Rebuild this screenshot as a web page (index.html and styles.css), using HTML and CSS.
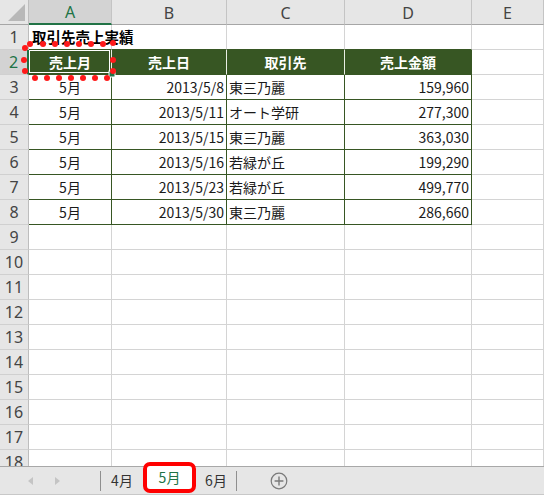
FILE: index.html
```html
<!DOCTYPE html>
<html lang="ja">
<head>
<meta charset="utf-8">
<link rel="stylesheet" href="styles.css">
</head>
<body>
<div class="sheet">
  <div class="grid">
    <div class="corner"><span class="tri"></span></div>
    <div class="ch sel">A</div>
    <div class="ch">B</div>
    <div class="ch">C</div>
    <div class="ch">D</div>
    <div class="ch">E</div>

    <div class="rh">1</div>
    <div class="c title tb">取引先売上実績</div>
    <div class="c tb"></div>
    <div class="c tb"></div>
    <div class="c tb"></div>
    <div class="c"></div>

    <div class="rh rsel">2</div>
    <div class="c hd">売上月</div>
    <div class="c hd">売上日</div>
    <div class="c hd">取引先</div>
    <div class="c hd last">売上金額</div>
    <div class="c"></div>

    <div class="rh">3</div>
    <div class="c d ctr">5月</div>
    <div class="c d num">2013/5/8</div>
    <div class="c d">東三乃麗</div>
    <div class="c d num">159,960</div>
    <div class="c"></div>

    <div class="rh">4</div>
    <div class="c d ctr">5月</div>
    <div class="c d num">2013/5/11</div>
    <div class="c d">オート学研</div>
    <div class="c d num">277,300</div>
    <div class="c"></div>

    <div class="rh">5</div>
    <div class="c d ctr">5月</div>
    <div class="c d num">2013/5/15</div>
    <div class="c d">東三乃麗</div>
    <div class="c d num">363,030</div>
    <div class="c"></div>

    <div class="rh">6</div>
    <div class="c d ctr">5月</div>
    <div class="c d num">2013/5/16</div>
    <div class="c d">若緑が丘</div>
    <div class="c d num">199,290</div>
    <div class="c"></div>

    <div class="rh">7</div>
    <div class="c d ctr">5月</div>
    <div class="c d num">2013/5/23</div>
    <div class="c d">若緑が丘</div>
    <div class="c d num">499,770</div>
    <div class="c"></div>

    <div class="rh">8</div>
    <div class="c d ctr">5月</div>
    <div class="c d num">2013/5/30</div>
    <div class="c d">東三乃麗</div>
    <div class="c d num">286,660</div>
    <div class="c"></div>

    <div class="rh">9</div><div class="c"></div><div class="c"></div><div class="c"></div><div class="c"></div><div class="c"></div>
    <div class="rh">10</div><div class="c"></div><div class="c"></div><div class="c"></div><div class="c"></div><div class="c"></div>
    <div class="rh">11</div><div class="c"></div><div class="c"></div><div class="c"></div><div class="c"></div><div class="c"></div>
    <div class="rh">12</div><div class="c"></div><div class="c"></div><div class="c"></div><div class="c"></div><div class="c"></div>
    <div class="rh">13</div><div class="c"></div><div class="c"></div><div class="c"></div><div class="c"></div><div class="c"></div>
    <div class="rh">14</div><div class="c"></div><div class="c"></div><div class="c"></div><div class="c"></div><div class="c"></div>
    <div class="rh">15</div><div class="c"></div><div class="c"></div><div class="c"></div><div class="c"></div><div class="c"></div>
    <div class="rh">16</div><div class="c"></div><div class="c"></div><div class="c"></div><div class="c"></div><div class="c"></div>
    <div class="rh">17</div><div class="c"></div><div class="c"></div><div class="c"></div><div class="c"></div><div class="c"></div>
    <div class="rh">18</div><div class="c"></div><div class="c"></div><div class="c"></div><div class="c"></div><div class="c"></div>
  </div>
  <svg class="marquee" width="544" height="466" viewBox="0 0 544 466">
    <rect x="29.5" y="50.5" width="80" height="22" fill="none" stroke="#ffffff" stroke-width="1"/>
    <rect x="109" y="71" width="6" height="6" fill="#217346" stroke="#ffffff" stroke-width="1"/>
    <g fill="#ff1a1a">
      <circle cx="30" cy="44" r="3"/><circle cx="43" cy="44" r="3"/><circle cx="55" cy="44" r="3"/><circle cx="67" cy="44" r="3"/><circle cx="79" cy="44" r="3"/><circle cx="91" cy="44" r="3"/><circle cx="103" cy="44" r="3"/><circle cx="113" cy="43" r="3"/>
      <circle cx="25" cy="48" r="3"/><circle cx="24" cy="60" r="3"/><circle cx="25" cy="71" r="3"/>
      <circle cx="113" cy="60" r="3"/><circle cx="113" cy="71" r="3"/>
      <circle cx="35" cy="78" r="3"/><circle cx="47" cy="78" r="3"/><circle cx="59" cy="78" r="3"/><circle cx="71" cy="78" r="3"/><circle cx="83" cy="78" r="3"/><circle cx="95" cy="78" r="3"/><circle cx="107" cy="78" r="3"/>
    </g>
  </svg>
</div>
<div class="tabbar">
  <div class="nav">
    <svg width="100" height="28" viewBox="0 0 100 28">
      <path d="M33 10 L28 14 L33 18 Z" fill="#c4c4c4"/>
      <path d="M55 10 L60 14 L55 18 Z" fill="#c4c4c4"/>
    </svg>
  </div>
  <div class="sep"></div>
  <div class="tab t4">4月</div>
  <div class="tab active">5月</div>
  <div class="tab t6">6月</div>
  <div class="sep"></div>
  <div class="add">
    <svg width="18" height="18" viewBox="0 0 18 18">
      <circle cx="9" cy="9" r="7.8" fill="none" stroke="#7a7a7a" stroke-width="1.2"/>
      <path d="M9 4.6 V13.4 M4.6 9 H13.4" stroke="#7a7a7a" stroke-width="1.4"/>
    </svg>
  </div>
</div>
</body>
</html>
```

FILE: styles.css
```css
* { box-sizing: border-box; }
html, body { margin: 0; padding: 0; }
body {
  width: 544px;
  height: 495px;
  overflow: hidden;
  background: #ffffff;
  font-family: "Noto Sans CJK JP", "Noto Sans", sans-serif;
  color: #1a1a1a;
}
.sheet {
  position: relative;
  height: 466px;
  overflow: hidden;
}
.grid {
  display: grid;
  grid-template-columns: 29px 83px 115px 118px 127px 72px;
  grid-auto-rows: 25px;
}
.corner {
  position: relative;
  background: #e6e6e6;
  border-right: 1px solid #bdbdbd;
  border-bottom: 1px solid #a6a6a6;
}
.tri {
  position: absolute;
  right: 3px;
  bottom: 3px;
  width: 0;
  height: 0;
  border-left: 17px solid transparent;
  border-bottom: 17px solid #b8b8b8;
}
.ch {
  background: #e6e6e6;
  border-right: 1px solid #c4c4c4;
  border-bottom: 1px solid #a6a6a6;
  font-family: "Noto Sans", sans-serif;
  font-size: 16px;
  color: #444;
  display: flex;
  align-items: center;
  justify-content: center;
  padding-top: 1px;
}
.ch.sel {
  background: #d3d3d3;
  color: #217346;
  border-bottom: 2px solid #217346;
}
.rh {
  background: #e6e6e6;
  border-right: 1px solid #bdbdbd;
  border-bottom: 1px solid #d0d0d0;
  font-family: "Noto Sans", sans-serif;
  font-size: 16px;
  color: #444;
  display: flex;
  align-items: center;
  justify-content: center;
}
.rh.rsel {
  background: #d3d3d3;
  color: #217346;
  border-right: 2px solid #217346;
}
.c {
  border-right: 1px solid #d4d4d4;
  border-bottom: 1px solid #d4d4d4;
  font-size: 14px;
  line-height: 24px;
  padding: 0 2px;
  white-space: nowrap;
  overflow: visible;
}
.c.tb { border-bottom-color: #375623; }
.title {
  font-weight: 700;
  font-size: 14.5px;
  padding-left: 3px;
  color: #000;
}
.hd {
  background: #375623;
  color: #ffffff;
  font-weight: 700;
  text-align: center;
  border-right-color: #e8ede4;
  border-bottom-color: #375623;
}
.hd.last { border-right-color: #375623; }
.d {
  border-right-color: #375623;
  border-bottom-color: #375623;
}
.ctr { text-align: center; }
.num { text-align: right; }

.marquee {
  position: absolute;
  left: 0;
  top: 0;
  pointer-events: none;
}

.tabbar {
  height: 29px;
  background: #e6e6e6;
  border-top: 1px solid #a8a8a8;
  border-bottom: 1px solid #c8c8c8;
  display: flex;
  align-items: center;
  font-size: 14px;
  color: #333;
}
.nav { width: 100px; height: 28px; }
.nav svg { display: block; }
.sep {
  width: 1px;
  height: 20px;
  background: #8f8f8f;
}
.tab {
  height: 28px;
  line-height: 27px;
  text-align: center;
}
.t4 { width: 42px; }
.t6 { width: 40px; }
.active {
  width: 53px;
  height: 31px;
  margin-top: -5px;
  align-self: flex-start;
  background: #ffffff;
  color: #217346;
  border: 4px solid #ff0000;
  border-radius: 7px;
  line-height: 22px;
}
.add {
  width: 84px;
  display: flex;
  justify-content: center;
  align-items: center;
}
.add svg { display: block; }
```
